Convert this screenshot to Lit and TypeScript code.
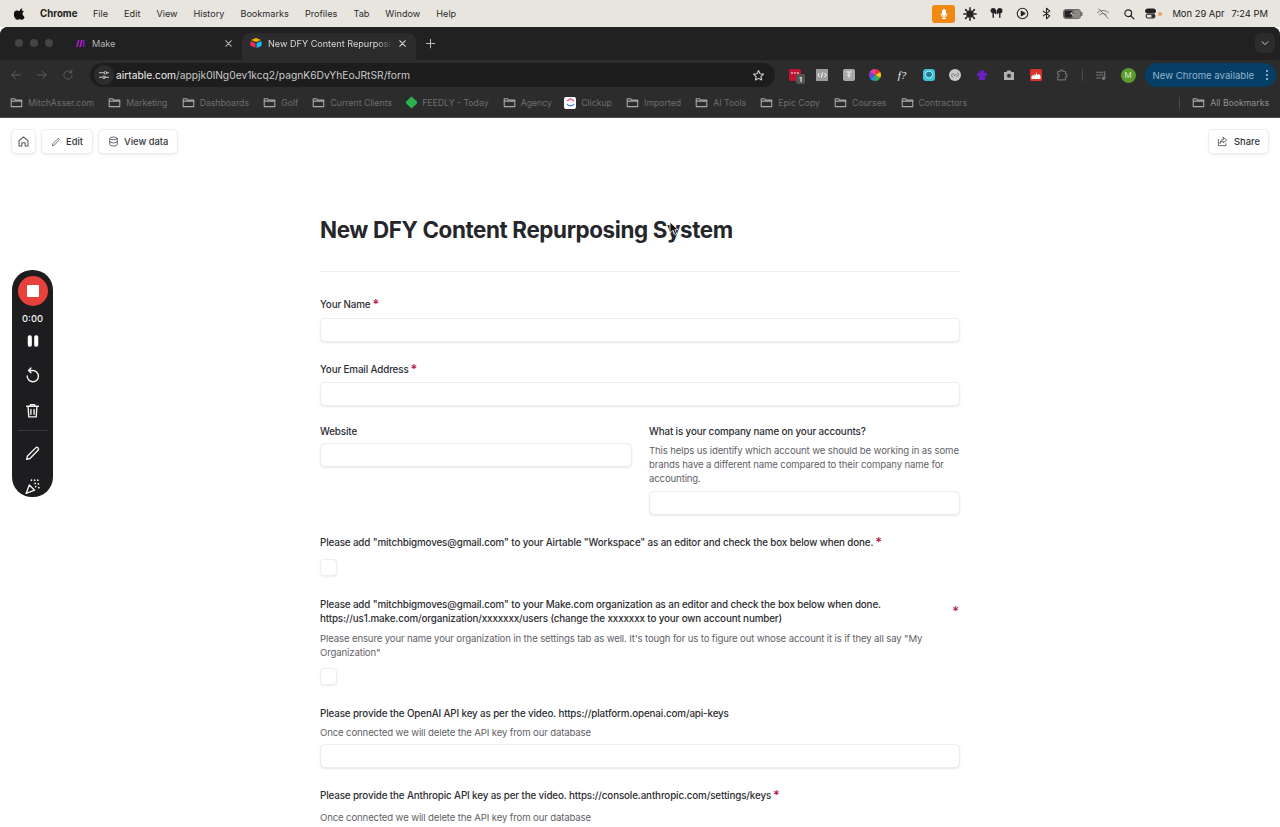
import { LitElement, html, css, svg } from "lit";
import { customElement } from "lit/decorators.js";

const ic = (size: number, body: unknown, extra = "") => html`<svg class="ic ${extra}" width=${size} height=${size} viewBox="0 0 16 16" fill="none" stroke="currentColor" stroke-width="1.3" stroke-linecap="round" stroke-linejoin="round">${body}</svg>`;

const folder = svg`<path d="M1.5 3.5h4.2l1.3 1.6h7.5v8H1.5z"/><path d="M1.5 6.3h13"/>`;

const bookmarks = [
  ["folder", "MitchAsser.com"],
  ["folder", "Marketing"],
  ["folder", "Dashboards"],
  ["folder", "Golf"],
  ["folder", "Current Clients"],
  ["feedly", "FEEDLY - Today"],
  ["folder", "Agency"],
  ["clickup", "Clickup"],
  ["folder", "Imported"],
  ["folder", "AI Tools"],
  ["folder", "Epic Copy"],
  ["folder", "Courses"],
  ["folder", "Contractors"],
];

const menus = ["File", "Edit", "View", "History", "Bookmarks", "Profiles", "Tab", "Window", "Help"];

@customElement("app-root")
export class AppRoot extends LitElement {
  static styles = css`
    :host { display: block; width: 1280px; height: 827px; overflow: hidden; position: relative; background: #fff; font-family: Inter, "Liberation Sans", sans-serif; color: #26272a; }
    * { box-sizing: border-box; }
    .ic { display: block; flex: none; }

    .menubar { height: 27px; background: #e7e5de; display: flex; align-items: center; padding: 0 12px 0 14px; font-size: 9.15px; color: #2b2b2b; }
    .apple { width: 12px; margin-right: 14px; }
    .menu-name { font-weight: 700; font-size: 9.7px; margin-right: 15.500px; color: #1c1c1c; }
    .menu-items { display: flex; gap: 16px; }
    .status { margin-left: auto; display: flex; align-items: center; color: #222; }
    .mic { width: 23px; height: 18px; background: #f08a12; border-radius: 3px; display: flex; align-items: center; justify-content: center; color: #fff; margin-right: 2px; }
    .st { width: 26px; display: flex; justify-content: center; }
    .st.bt { width: 22px; }
    .st.bat { width: 32px; }
    .st.wifi { width: 28px; color: #777; }
    .st.search { width: 24px; }
    .st.ctl { width: 18px; }
    .orange-dot { width: 4px; height: 4px; border-radius: 50%; background: #e9a25c; margin: 0 10px 0 -1px; }
    .clock { display: flex; gap: 7px; font-size: 9.4px; }

    .chrome { height: 91px; background: #2c2c2c; border-radius: 8px 8px 0 0; border-bottom: 1px solid #4c4c4c; overflow: hidden; }
    .tabstrip { height: 33px; background: #212121; display: flex; align-items: flex-end; position: relative; padding-left: 15px; }
    .lights { display: flex; gap: 7px; width: 52px; height: 33px; padding-bottom: 2px; align-items: center; }
    .lights i { width: 8px; height: 8px; border-radius: 50%; background: #444; }
    .tab { height: 27px; width: 172px; display: flex; align-items: center; padding: 0 6px 7px 8px; font-size: 9.1px; color: #b5b5b5; gap: 6px; }
    .tab.active { background: #2c2c2c; border-radius: 8px 8px 0 0; color: #d8d8d8; width: 174px; margin-left: 3px; padding-right: 9px; }
    .tab .t { flex: 1; white-space: nowrap; overflow: hidden; }
    .tab.active .t { -webkit-mask-image: linear-gradient(90deg, #000 88%, transparent); mask-image: linear-gradient(90deg, #000 88%, transparent); }
    .plus { color: #bbb; margin: 0 0 11px 9px; }
    .chev { margin-left: auto; margin-right: 5px; margin-bottom: 7px; width: 20px; height: 20px; background: #2c2c2c; border-radius: 6px; display: flex; align-items: center; justify-content: center; color: #ccc; }

    .toolbar { height: 30px; display: flex; align-items: center; padding: 0 4px 0 10px; }
    .nav { display: flex; gap: 14px; color: #5f5f5f; width: 80px; }
    .omni { width: 685px; height: 24px; background: #1d1d1d; border-radius: 12px; display: flex; align-items: center; padding: 0 10px 0 4px; font-size: 10.25px; color: #c9c9c9; }
    .tune { width: 20px; height: 20px; border-radius: 50%; background: #2d2d2d; display: flex; align-items: center; justify-content: center; color: #cfcfcf; margin-right: 2px; }
    .omni b { font-weight: 400; color: #f0f0f0; }
    .omni .star { margin-left: auto; color: #d5d5d5; }
    .exts { display: flex; align-items: center; margin-left: 7px; }
    .ex { width: 26.7px; height: 20px; display: flex; align-items: center; justify-content: center; position: relative; color: #aaa; }
    .ex.gray { color: #6c6c6c; }
    .ex.list { color: #7a7a7a; width: 26px; }
    .badge { position: absolute; left: 14px; top: 9px; width: 9px; height: 10px; background: #555; border-radius: 2px; color: #fff; font-size: 6px; font-weight: 700; display: flex; align-items: center; justify-content: center; }
    .fx { font-family: "Liberation Serif", serif; font-style: italic; font-size: 11px; color: #eee; }
    .sep { width: 1px; height: 12px; background: #4a4a4a; margin: 0 6px; }
    .avatar { width: 15px; height: 15px; border-radius: 50%; background: #5c9a2e; color: #d8ecc8; font-size: 8px; display: flex; align-items: center; justify-content: center; margin: 0 9px 0 6px; }
    .update { width: 131px; height: 24px; border-radius: 12px; background: #063f66; color: #8fb4cf; font-size: 9.6px; display: flex; align-items: center; padding: 0 8px; justify-content: space-between; }
    .dots { display: flex; flex-direction: column; gap: 2px; }
    .dots i { width: 2px; height: 2px; border-radius: 50%; background: #a8d0ec; }

    .bookbar { height: 27px; display: flex; align-items: center; padding: 0 11px 2px 10px; font-size: 8.7px; color: #6e6e6e; gap: 14.2px; }
    .bm { display: flex; align-items: center; gap: 5px; white-space: nowrap; }
    .bm .ic { color: #a9a9a9; }
    .bm .all { color: #909090; }
    .feedly { width: 11px; height: 11px; background: #2bb24c; transform: rotate(45deg) scale(.8); border-radius: 2px; }
    .clickup { width: 12px; height: 12px; margin-left: -2px; background: #fff; border-radius: 2px; display: flex; align-items: center; justify-content: center; }
    .bm-sep { width: 1px; height: 12px; background: #4a4a4a; margin-left: auto; margin-right: -2px; }

    .page { padding: 11px 11px 0; }
    .actions { display: flex; gap: 5px; }
    .btn { height: 25px; display: flex; align-items: center; gap: 5px; padding: 0 9px; border-radius: 5px; background: #fff; border: 1px solid #eee; box-shadow: 0 1px 2px rgba(0,0,0,.08); font-size: 9.4px; font-weight: 500; color: #33353a; }
    .btn .ic { color: #55575c; }
    .btn.home { width: 25px; padding: 0; justify-content: center; }
    .btn.share { margin-left: auto; width: 61px; padding: 0 8px; gap: 6px; }

    .form { width: 640px; margin: 0 auto; padding-top: 60px; }
    h1 { margin: 0; font-size: 22.4px; line-height: 32px; font-weight: 650; letter-spacing: -.38px; color: #25262a; }
    .rule { height: 1px; background: #f0f0f0; margin: 25px 0 25px; }
    .fields { display: flex; flex-direction: column; gap: 20px; }
    .field { display: flex; flex-direction: column; }
    .label { font-size: 9.8px; letter-spacing: -.125px; line-height: 14.5px; padding-top: 1px; font-weight: 500; color: #2c2d31; display: flex; }
    .label span { flex: 1; }
    .star-r { color: #b5164a; font-size: 13px; line-height: 0; vertical-align: -1px; margin-left: 2px; font-weight: 500; font-style: normal; }
    .label.spread .star-r { margin: 7px 1px 0 0; flex: none; line-height: 12px; }
    .label.compact { display: block; }
    .label.compact span { flex: none; }
    .desc { font-size: 9.6px; letter-spacing: -.135px; line-height: 14px; color: #5f6167; margin-top: 4.5px; }
    .input { height: 24px; border: 1px solid #eee; border-radius: 5px; background: #fff; box-shadow: 0 1px 2px rgba(0,0,0,.1); margin-top: 5px; }
    .check { width: 17px; height: 17px; border: 1px solid #eee; border-radius: 4px; background: #fff; box-shadow: 0 1px 2px rgba(0,0,0,.08); margin-top: 8.500px; }
    .two { display: grid; grid-template-columns: 312px 311px; gap: 17px; align-items: start; margin-top: -2px; }
    .two .label + .input { margin-top: 3.500px; }
    .two .desc + .input { margin-top: 5px; }
    .make { margin-top: .5px; }
    .make .desc { margin-top: 5px; }
    .make .check { margin-top: 8px; }
    .openai { margin-top: 1.500px; }
    .openai .input { margin-top: 4.300px; }
    .last { margin-top: 7px; }

    .recorder { position: absolute; left: 12px; top: 270px; width: 41px; height: 227px; background: #1d1d1f; border-radius: 20px; display: flex; flex-direction: column; align-items: center; overflow: hidden; color: #f4f4f4; padding-top: 6px; }
    .rec { width: 30px; height: 30px; border-radius: 50%; background: #e8403a; display: flex; align-items: center; justify-content: center; flex: none; }
    .rec i { width: 12px; height: 12px; background: #fff; border-radius: 1px; }
    .time { font-size: 9.4px; font-weight: 500; margin-top: 7px; line-height: 12px; }
    .rg { margin-top: 9px; }
    .undo { margin-top: 19px; }
    .trash { margin-top: 18px; }
    .rdiv { width: 30px; height: 1px; background: #3a3a3c; margin-top: 11px; flex: none; }
    .pen { margin-top: 14px; }
    .party { margin-top: 16px; }
    .cursor { position: absolute; left: 669px; top: 221px; }
  `;

  label(text: string, required = false, cls = "compact") {
    return html`<div class="label ${cls}"><span>${text}${required && cls === "compact" ? html`<i class="star-r">*</i>` : ""}</span>${required && cls !== "compact" ? html`<i class="star-r">*</i>` : ""}</div>`;
  }

  render() {
    return html`
      <div class="menubar">
        <svg class="apple" viewBox="0 0 170 170" width="12" height="12" fill="#111"><path d="M150 130c-3 6-6 12-10 17-5 7-10 12-13 14-5 5-11 7-17 7-4 0-9-1-15-4-6-2-11-4-16-4s-11 2-17 4c-6 3-10 4-14 4-6 0-12-2-18-7-4-3-8-8-13-15-6-8-10-17-14-27-4-11-6-22-6-32 0-12 3-22 8-31 4-7 9-12 16-16s14-6 21-6c4 0 10 1 17 4s12 4 14 4 8-1 16-5c7-3 14-4 19-3 14 1 24 6 32 17-13 8-19 18-19 32 0 11 4 19 11 26 3 3 7 6 11 7-1 3-2 6-3 8zM118 7c0 8-3 16-9 24-7 8-16 13-26 12-1-1-1-2-1-3 0-8 4-16 9-22 3-3 6-6 11-8 4-2 8-3 12-4 0 1 0 1 4 1z"/></svg>
        <span class="menu-name">Chrome</span>
        <div class="menu-items">${menus.map((m) => html`<span>${m}</span>`)}</div>
        <div class="status">
          <div class="mic">${ic(12, svg`<rect x="6" y="2" width="4" height="8" rx="2" fill="currentColor"/><path d="M4 8a4 4 0 0 0 8 0M8 12v2M6 14h4"/>`)}</div>
          <div class="st">${ic(14, svg`<circle cx="8" cy="8" r="3.6" fill="currentColor"/><path stroke-width="1.8" d="M8 1v2M8 13v2M1 8h2M13 8h2M3 3l1.4 1.4M11.6 11.6 13 13M13 3l-1.4 1.4M4.4 11.6 3 13"/>`)}</div>
          <div class="st">${ic(15, svg`<path stroke-width="1.5" d="M4.500 6v6M11.500 6v6M7 5v3M9 5v3"/><circle cx="4.500" cy="5" r="2.200" fill="currentColor"/><circle cx="11.500" cy="5" r="2.200" fill="currentColor"/>`)}</div>
          <div class="st">${ic(13, svg`<circle cx="8" cy="8" r="6.5"/><path d="M6.5 5.2 11 8l-4.5 2.8z" fill="currentColor"/>`)}</div>
          <div class="st bt">${ic(13, svg`<path d="m4 5 8 6-4 3.5v-13L12 5l-8 6"/>`)}</div>
          <div class="st bat"><svg width="20" height="10" viewBox="0 0 20 10"><rect x=".5" y=".5" width="17" height="9" rx="2.5" fill="#8a8a86" stroke="#6a6a66"/><rect x="18" y="3" width="1.5" height="4" fill="#777"/><rect x="1.5" y="1.5" width="8" height="7" rx="1" fill="#222"/><path d="M10.5 1 6.5 5.5h3L8 9l4-4.6H9z" fill="#fff" stroke="#222" stroke-width=".5"/></svg></div>
          <div class="st wifi">${ic(14, svg`<path d="M1.5 6.5a9 9 0 0 1 13 0M4 9a5.5 5.5 0 0 1 8 0M3 2l11 11" stroke-width="1.1"/>`)}</div>
          <div class="st search">${ic(12, svg`<circle cx="7" cy="7" r="4.5" stroke-width="1.6"/><path d="m10.5 10.5 4 4" stroke-width="1.8"/>`)}</div>
          <div class="st ctl">${ic(13, svg`<rect x="2" y="2.5" width="12" height="5" rx="2.5" fill="currentColor"/><rect x="2.6" y="9" width="10.8" height="4.5" rx="2.2"/><circle cx="11" cy="11.2" r="1.4" fill="currentColor"/>`)}</div>
          <i class="orange-dot"></i>
          <div class="clock"><span>Mon 29 Apr</span><span>7:24 PM</span></div>
        </div>
      </div>

      <div class="chrome">
        <div class="tabstrip">
          <div class="lights"><i></i><i></i><i></i></div>
          <div class="tab">
            <svg class="ic" width="11" height="9" viewBox="0 0 11 9"><path d="M1 8 3 1h1.600L2.600 8z" fill="#a51bd8"/><path d="M4.400 8 6 1h1.600L6 8z" fill="#c21ec0"/><path d="M8 8V1h1.600v7z" fill="#7a12e0"/></svg>
            <span class="t">Make</span>
            ${ic(9, svg`<path stroke-width="1.8" d="m3 3 10 10M13 3 3 13"/>`)}
          </div>
          <div class="tab active">
            <svg class="ic" width="12" height="12" viewBox="0 0 12 12"><path d="M6 1 11 3 6 5 1 3z" fill="#fcb400"/><path d="M6.600 6 11.500 4v5L6.600 11z" fill="#18bfff"/><path d="M.5 4 5.400 6.300v4.500L.5 8.400z" fill="#f82b60"/></svg>
            <span class="t">New DFY Content Repurposing System</span>
            ${ic(9, svg`<path stroke-width="1.8" d="m3 3 10 10M13 3 3 13"/>`)}
          </div>
          <div class="plus">${ic(11, svg`<path stroke-width="1.5" d="M8 2v12M2 8h12"/>`)}</div>
          <div class="chev">${ic(10, svg`<path stroke-width="1.6" d="m3.500 6 4.500 4.500L12.500 6"/>`)}</div>
        </div>

        <div class="toolbar">
          <div class="nav">
            ${ic(12, svg`<path d="M14 8H2.500M7.500 3l-5 5 5 5"/>`)}
            ${ic(12, svg`<path d="M2 8h11.500M8.500 3l5 5-5 5"/>`)}
            ${ic(12, svg`<path d="M13.500 8A5.500 5.500 0 1 1 12 4.200M13 1.500v3.500H9.500"/>`)}
          </div>
          <div class="omni">
            <div class="tune">${ic(12, svg`<path d="M2 5h6M2 11h4M12 5h2M10 11h4"/><circle cx="10" cy="5" r="1.700"/><circle cx="8" cy="11" r="1.700"/>`)}</div>
            <span><b>airtable.com</b>/appjk0lNg0ev1kcq2/pagnK6DvYhEoJRtSR/form</span>
            <div class="star">${ic(13, svg`<path d="m8 1.800 1.900 4 4.300.500-3.200 3 .900 4.300L8 11.500l-3.800 2.100.900-4.300-3.200-3 4.300-.500z"/>`)}</div>
          </div>
          <div class="exts">
            <div class="ex"><svg width="12" height="12" viewBox="0 0 12 12"><rect width="12" height="12" rx="2" fill="#c2142e"/><path d="M2 4h2M5 4h2M8 4h2" stroke="#fff"/></svg><span class="badge">1</span></div>
            <div class="ex"><svg width="12" height="12" viewBox="0 0 12 12"><rect width="12" height="12" fill="#9c9c9c"/><path d="M3.500 4 1.800 6l1.700 2M8.500 4l1.700 2-1.700 2M6.700 3.500 5.300 8.500" fill="none" stroke="#fff"/></svg></div>
            <div class="ex"><svg width="12" height="12" viewBox="0 0 12 12"><rect width="12" height="12" rx="2" fill="#a8a8a8"/><path d="M3 3h6M6 3v6M4 6h4" stroke="#eee" fill="none"/></svg></div>
            <div class="ex"><svg width="12" height="12" viewBox="0 0 12 12"><path d="M6 6 6 0A6 6 0 0 1 11.200 3z" fill="#e8352e"/><path d="M6 6 11.200 3A6 6 0 0 1 11.200 9z" fill="#f5c518"/><path d="M6 6 11.200 9A6 6 0 0 1 6 12z" fill="#35b04a"/><path d="M6 6V12A6 6 0 0 1 .8 9z" fill="#1f8fe0"/><path d="M6 6 .8 9A6 6 0 0 1 .8 3z" fill="#7b3fd6"/><path d="M6 6 .8 3A6 6 0 0 1 6 0z" fill="#e53fb0"/></svg></div>
            <div class="ex"><span class="fx">f?</span></div>
            <div class="ex"><svg width="12" height="12" viewBox="0 0 12 12"><rect width="12" height="12" rx="3" fill="#3cc4dc"/><circle cx="6" cy="5.500" r="3.500" fill="#1a7d92" stroke="#bdf0f8"/></svg></div>
            <div class="ex"><svg width="12" height="12" viewBox="0 0 12 12"><circle cx="6" cy="6" r="6" fill="#c9c9c9"/><path d="M4 8a1.500 1.500 0 0 1 0-3h1M8 4a1.500 1.500 0 0 1 0 3H7M5 7l2-2" stroke="#777" fill="none"/></svg></div>
            <div class="ex"><svg width="12" height="12" viewBox="0 0 12 12"><path d="M1 4h2.500V1.500h5V4H11v3H9v4H3V7H1z" fill="#6a1fc4"/></svg></div>
            <div class="ex"><svg width="12" height="12" viewBox="0 0 12 12"><path d="M1 3h2.500l1-1.500h3L8.500 3H11v8H1z" fill="#b0b0b0"/><circle cx="6" cy="6.800" r="2" fill="#333"/></svg></div>
            <div class="ex"><svg width="12" height="12" viewBox="0 0 12 12"><rect width="12" height="12" rx="1.500" fill="#d8322a"/><path d="M1.500 10V7l1.500-1 1.500 1V5l1.500 1V3l1.500 3 1.500-1 1.500 2v3z" fill="#fff"/></svg></div>
            <div class="ex gray">${ic(14, svg`<path d="M3 4h3V2.500h3V4h3v3h1.500v3H12v3.500H3V10h1.500V7H3z"/>`)}</div>
            <div class="sep"></div>
            <div class="ex list">${ic(13, svg`<path d="M2 4h8M2 7.500h8M2 11h5M12 3v8"/><circle cx="10.500" cy="11.500" r="1.500" fill="currentColor"/>`)}</div>
            <div class="avatar">M</div>
            <div class="update"><span>New Chrome available</span><span class="dots"><i></i><i></i><i></i></span></div>
          </div>
        </div>

        <div class="bookbar">
          ${bookmarks.map(([kind, text]) => html`<div class="bm">
            ${kind === "folder" ? ic(13, folder) : kind === "feedly" ? html`<i class="feedly"></i>` : html`<span class="clickup"><svg width="9" height="9" viewBox="0 0 9 9"><path d="M1 3 4.500 .8 8 3" fill="none" stroke="#ff3d8b" stroke-width="1.200"/><path d="M1 6c1.600 2.400 5.400 2.400 7 0" fill="none" stroke="#3a6df0" stroke-width="1.200"/></svg></span>`}
            <span>${text}</span>
          </div>`)}
          <div class="bm-sep"></div>
          <div class="bm">${ic(13, folder)}<span class="all">All Bookmarks</span></div>
        </div>
      </div>

      <div class="page">
        <div class="actions">
          <div class="btn home">${ic(13, svg`<path d="M2.500 7 8 2.500 13.500 7v6.500H10V9.500H6v4H2.500z"/>`)}</div>
          <div class="btn">${ic(10, svg`<path d="M2.500 13.500 3.200 10.500 11 2.700a1.300 1.300 0 0 1 2 2L5.400 12.800z"/>`)}<span>Edit</span></div>
          <div class="btn">${ic(11, svg`<ellipse cx="8" cy="3.500" rx="5.500" ry="2"/><path d="M2.500 3.500v9c0 1 2.500 2 5.500 2s5.500-1 5.500-2v-9M2.500 8c0 1 2.500 2 5.500 2s5.500-1 5.500-2"/>`)}<span>View data</span></div>
          <div class="btn share">${ic(11, svg`<path d="M2 5v9h11v-3M9 2l5 4-5 4V7.500C6.500 7.500 5 9 4.500 11c0-3.500 1.500-6 4.500-6z"/>`)}<span>Share</span></div>
        </div>

        <div class="form">
          <h1>New DFY Content Repurposing System</h1>
          <div class="rule"></div>
          <div class="fields">
            <div class="field">${this.label("Your Name", true)}<div class="input"></div></div>
            <div class="field">${this.label("Your Email Address", true)}<div class="input"></div></div>
            <div class="two">
              <div class="field">${this.label("Website")}<div class="input"></div></div>
              <div class="field">
                ${this.label("What is your company name on your accounts?")}
                <div class="desc">This helps us identify which account we should be working in as some brands have a different name compared to their company name for accounting.</div>
                <div class="input"></div>
              </div>
            </div>
            <div class="field">${this.label('Please add "mitchbigmoves@gmail.com" to your Airtable "Workspace" as an editor and check the box below when done.', true)}<div class="check"></div></div>
            <div class="field make">
              ${this.label('Please add "mitchbigmoves@gmail.com" to your Make.com organization as an editor and check the box below when done. https://us1.make.com/organization/xxxxxxx/users (change the xxxxxxx to your own account number)', true, "spread")}
              <div class="desc">Please ensure your name your organization in the settings tab as well. It's tough for us to figure out whose account it is if they all say "My Organization"</div>
              <div class="check"></div>
            </div>
            <div class="field openai">
              ${this.label("Please provide the OpenAI API key as per the video. https://platform.openai.com/api-keys")}
              <div class="desc">Once connected we will delete the API key from our database</div>
              <div class="input"></div>
            </div>
            <div class="field">
              ${this.label("Please provide the Anthropic API key as per the video. https://console.anthropic.com/settings/keys", true)}
              <div class="desc last">Once connected we will delete the API key from our database</div>
            </div>
          </div>
        </div>
      </div>

      <div class="recorder">
        <div class="rec"><i></i></div>
        <div class="time">0:00</div>
        <div class="rg"><svg class="ic" width="14" height="14" viewBox="0 0 12 12" fill="#fff"><rect x="1.500" y="1" width="3.500" height="10" rx="1.500"/><rect x="7" y="1" width="3.500" height="10" rx="1.500"/></svg></div>
        <div class="undo">${ic(17, svg`<path d="M3 8.500A5.300 5.300 0 1 0 8.300 3.300H4.500M6.500 1 4.300 3.300l2.200 2.200"/>`)}</div>
        <div class="trash">${ic(17, svg`<path d="M2.500 4h11M6 4V2.500h4V4M3.800 4l.7 10h7l.7-10M6.500 7v4.500M9.500 7v4.500"/>`)}</div>
        <div class="rdiv"></div>
        <div class="pen">${ic(17, svg`<path d="M2.500 13.500 3.300 10.300 11 2.700a1.500 1.500 0 0 1 2.200 2.200L5.600 12.700z"/>`)}</div>
        <div class="party">${ic(17, svg`<path d="M2 14.500 5 6.500l5 5z"/><path d="M10 2v.1M13 2v.1M13.500 5.500v.1M10.500 5v.1M14 9v.1M7 2v.1M11 8v.1" stroke-width="1.600"/>`)}</div>
      </div>

      <svg class="cursor" width="10" height="15" viewBox="0 0 10 15"><path d="M1 1v11l3-2.600 2 4.500 1.800-.8-2-4.400H9z" fill="#111" stroke="#fff" stroke-width=".8"/></svg>
    `;
  }
}
